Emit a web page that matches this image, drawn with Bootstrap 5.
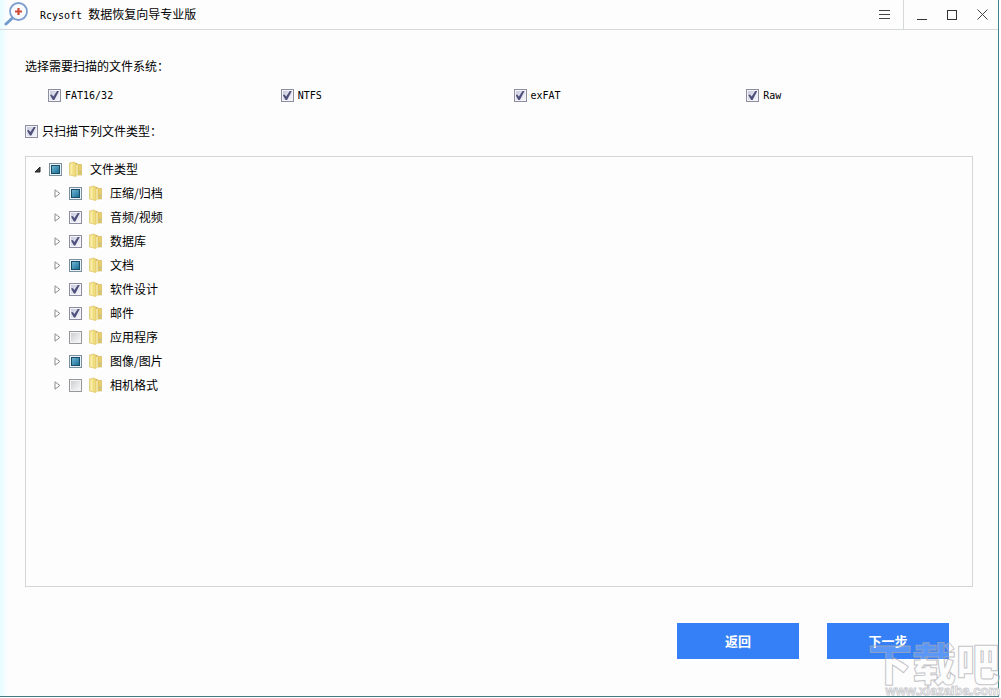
<!DOCTYPE html>
<html lang="zh-CN">
<head>
<meta charset="utf-8">
<meta name="viewport" content="width=device-width, initial-scale=1">
<title>Rcysoft 数据恢复向导专业版</title>
<link href="https://cdn.jsdelivr.net/npm/bootstrap@5.3.0/dist/css/bootstrap.min.css" rel="stylesheet">
<style>
  body { background: #fff; color: #000; font: 12px/24px "Noto Sans CJK SC", sans-serif; }
  .latin { font-family: "DejaVu Sans Mono", monospace; font-size: 10px; }
  .app-window {
    min-height: calc(100vh - 1px); margin-right: 2px; background: linear-gradient(90deg, #e6fcff, #fdfdfd 8px);
    border-right: 1px solid #3f8290; border-bottom: 1px solid #4a7885;
  }
  .title-bar { height: 30px; border-bottom: 1px solid #d5d9da; }
  .title-bar h1 { font-size: 12px; line-height: 28px; font-weight: 400; }
  .win-btn { width: 30px; height: 29px; padding: 0; border: 0; background: none; display: grid; place-items: center; }
  .menu-cell { border-right: 1px solid #d5d9da; width: 35px; }
  .win-group { padding: 0 1px 0 3px; }
  .win-btn svg, .twisty svg { display: block; }
  .content { padding: 24px 25px 0; }
  .fs-row { margin: 5px -6px 0 23px; }
  .fs-row label { padding-top: 1px; }
  .tick {
    appearance: none; flex: none; width: 13px; height: 13px; margin: 0; border: 1px solid #8d8fa0;
    background: linear-gradient(135deg, #c9cbdd, #f6f6fc) content-box, #f4f4f8; padding: 1px; display: grid; place-items: center;
  }
  .tick:not(:checked) { border-color: #96989c; background: linear-gradient(135deg, #ccced0, #f8f8f8) content-box, #f4f4f4; }
  .tick:checked::before {
    content: ""; width: 9px; height: 9px; background: #50507c;
    clip-path: polygon(0 45%, 18% 38%, 38% 62%, 78% 0, 100% 0, 48% 100%, 32% 100%);
  }
  .tick:indeterminate { border-color: #7c8f9e; background: #e9f3f7; }
  .tick:indeterminate::before {
    content: ""; width: 9px; height: 9px; border: 1px solid #174b66;
    background: linear-gradient(135deg, #6db5d3, #1c6f96);
  }
  .only-row { margin-top: 11px; }
  .tree-box { border: 1px solid #d3d5d8; margin-top: 13px; background: #fdfdfd; }
  .tree-line { padding-left: 4px; height: 24px; }
  .tree-kids { padding-left: 20px; }
  .twisty { width: 14px; height: 24px; padding: 0; border: 0; background: none; display: grid; place-items: center; margin-right: 5px; }
  .tree-line label { padding-left: 6px; gap: 6px; }
  .actions { padding: 36px 24px 37px; gap: 28px; }
  .actions .btn {
    --bs-btn-bg: #3580f6; --bs-btn-hover-bg: #226fe8; --bs-btn-border-radius: 0;
    width: 122px; height: 36px; border: 0; padding: 0; font-size: 13px; font-weight: 700;
  }
  .watermark { position: absolute; right: 1px; bottom: 0; pointer-events: none; text-align: right; white-space: nowrap; color: rgba(255,255,255,.2); }
  .wm-name { font-size: 44px; line-height: 44px; font-weight: 900; -webkit-text-stroke: 1px rgba(170,170,176,.7); }
  .wm-site { font: 700 13px/14px "Liberation Sans", sans-serif; color: #fff; -webkit-text-stroke: 1px rgba(185,185,190,.7); }
</style>
</head>
<body>
<div class="app-window d-flex flex-column">
  <header class="title-bar d-flex align-items-start">
    <svg class="flex-shrink-0 ms-1" width="28" height="28" viewBox="0 0 28 28" aria-hidden="true">
      <path d="M9 17.500 2 24" stroke="#6f9bce" stroke-width="3" stroke-linecap="round"/>
      <circle cx="14.500" cy="11.500" r="8.500" fill="#f9fbff" stroke="#7d9fce" stroke-width="1.800"/>
      <path d="M14.500 8v7M11 11.500h7" stroke="#cf4b38" stroke-width="2.200"/>
    </svg>
    <h1 class="mb-0 ms-2 flex-grow-1"><span class="latin">Rcysoft </span>数据恢复向导专业版</h1>
    <div class="menu-cell d-flex"><button class="win-btn" type="button" aria-label="菜单"><svg width="11" height="11" shape-rendering="crispEdges"><path d="M0 1.500h11M0 5.500h11M0 9.500h11" stroke="#444"/></svg></button></div>
    <div class="win-group d-flex">
      <button class="win-btn" type="button" aria-label="最小化"><svg width="11" height="11" shape-rendering="crispEdges"><path d="M0 10.500h10" stroke="#333"/></svg></button>
      <button class="win-btn" type="button" aria-label="最大化"><svg width="11" height="11" shape-rendering="crispEdges"><path d="M.5 1.500h9v9h-9z" fill="none" stroke="#333"/></svg></button>
      <button class="win-btn" type="button" aria-label="关闭"><svg width="11" height="11"><path d="m.5 .5 10 10m0-10-10 10" stroke="#444"/></svg></button>
    </div>
  </header>

  <main class="content d-flex flex-column flex-grow-1">
    <div id="fs-label">选择需要扫描的文件系统：</div>
    <div class="fs-row row g-0" role="group" aria-labelledby="fs-label">
      <div class="col-3 d-flex align-items-center"><input class="tick" type="checkbox" id="fat" checked><label class="latin ps-1" for="fat">FAT16/32</label></div>
      <div class="col-3 d-flex align-items-center"><input class="tick" type="checkbox" id="ntfs" checked><label class="latin ps-1" for="ntfs">NTFS</label></div>
      <div class="col-3 d-flex align-items-center"><input class="tick" type="checkbox" id="exfat" checked><label class="latin ps-1" for="exfat">exFAT</label></div>
      <div class="col-3 d-flex align-items-center"><input class="tick" type="checkbox" id="raw" checked><label class="latin ps-1" for="raw">Raw</label></div>
    </div>
    <div class="only-row d-flex align-items-center"><input class="tick" type="checkbox" id="only" checked><label class="ps-1" for="only">只扫描下列文件类型：</label></div>

    <div class="tree-box flex-grow-1">
      <ul class="list-unstyled mb-0" id="tree"></ul>
    </div>
    <div class="actions d-flex justify-content-end">
      <button class="btn btn-primary" type="button">返回</button>
      <button class="btn btn-primary" type="button">下一步</button>
    </div>
  </main>
</div>
<div class="watermark"><div class="wm-name">下载吧</div><div class="wm-site">www.xiazaiba.com</div></div>

<script src="https://cdn.jsdelivr.net/npm/bootstrap@5.3.0/dist/js/bootstrap.bundle.min.js"></script>
<script>
  const folder = `<svg width="16" height="16" viewBox="0 0 16 16" aria-hidden="true">
    <path d="M6 1.500 10 2.500v11.500L8 15z" fill="#cfae45"/>
    <path d="M8 4 10 3v11l-2 1z" fill="#fbf3bd"/>
    <path d="M10 3.500h3.500v10.500H10z" fill="#e9d06c" stroke="#cdb04a" stroke-width=".6"/>
    <path d="M1.500 2 6.500 1l1.500 1.500v13L1.500 14z" fill="#f0dc80" stroke="#d8bd58" stroke-width=".6"/>
    <path d="M2.500 3v10.500l2 .5V2.600z" fill="#f9eda9"/>
    <path d="M11.500 9.500h1v3h-1z" fill="#a9b88c"/></svg>`;
  const shut = '<svg width="7" height="9"><path d="M1 .8v7.400L5.800 4.500z" fill="#fff" stroke="#8b8b8b"/></svg>';
  const open = '<svg width="7" height="7"><path d="M6 1v5H1z" fill="#444" stroke="#222"/></svg>';

  function line(name, state, id, expanded) {
    return `<div class="tree-line d-flex align-items-center">
      <button class="twisty" type="button" aria-label="${name}" aria-expanded="${expanded}">${expanded ? open : shut}</button>
      <input class="tick" type="checkbox" id="${id}" data-state="${state}"${state === 'on' ? ' checked' : ''}>
      <label class="d-flex align-items-center" for="${id}">${folder}<span>${name}</span></label></div>`;
  }
  const kinds = [['压缩/归档', 'part'], ['音频/视频', 'on'], ['数据库', 'on'], ['文档', 'part'], ['软件设计', 'on'],
    ['邮件', 'on'], ['应用程序', 'off'], ['图像/图片', 'part'], ['相机格式', 'off']];
  document.getElementById('tree').innerHTML = `<li>${line('文件类型', 'part', 'k-all', true)}
    <ul class="tree-kids list-unstyled">${kinds.map(([n, s], i) => `<li>${line(n, s, 'k' + i, false)}</li>`).join('')}</ul></li>`;
  document.querySelectorAll('[data-state=part]').forEach(box => { box.indeterminate = true; });
</script>
</body>
</html>
